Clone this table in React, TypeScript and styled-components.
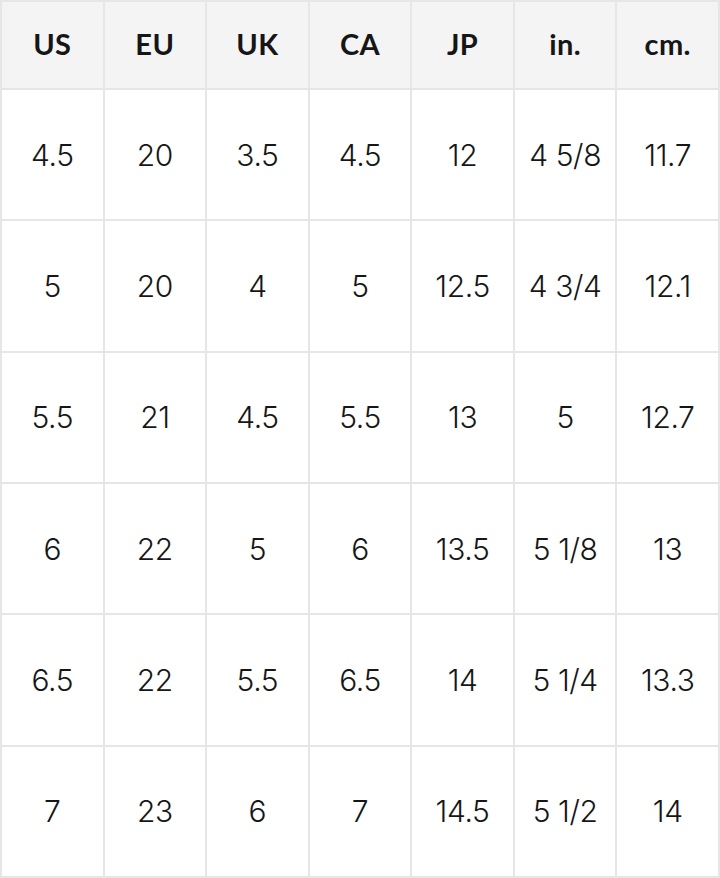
import styled, { createGlobalStyle } from "styled-components"

const GlobalStyle = createGlobalStyle`
    html, body {
        margin: 0;
        padding: 0;
        background: #ffffff;
    }
    body {
        font-family: Inter, "Noto Sans", "Liberation Sans", sans-serif;
        color: #161616;
    }
`

const headers = ["US", "EU", "UK", "CA", "JP", "in.", "cm."]

const rows = [
    ["4.5", "20", "3.5", "4.5", "12", "4 5/8", "11.7"],
    ["5", "20", "4", "5", "12.5", "4 3/4", "12.1"],
    ["5.5", "21", "4.5", "5.5", "13", "5", "12.7"],
    ["6", "22", "5", "6", "13.5", "5 1/8", "13"],
    ["6.5", "22", "5.5", "6.5", "14", "5 1/4", "13.3"],
    ["7", "23", "6", "7", "14.5", "5 1/2", "14"],
]

const Chart = styled.div`
    width: 720px;
    height: 878px;
    box-sizing: border-box;
    display: grid;
    grid-template-columns: repeat(7, 1fr);
    grid-template-rows: 86px repeat(6, 1fr);
    gap: 2px;
    padding: 2px;
    background-color: #e6e6e6;
`

const Cell = styled.div<{ $head?: boolean }>`
    display: flex;
    align-items: center;
    justify-content: center;
    background-color: ${({ $head }) => ($head ? "#f4f4f4" : "#ffffff")};
    font-family: ${({ $head }) => ($head ? "Lato, Inter, sans-serif" : "Inter, sans-serif")};
    font-size: ${({ $head }) => ($head ? "29px" : "30px")};
    font-weight: ${({ $head }) => ($head ? 700 : 300)};
    letter-spacing: ${({ $head }) => ($head ? "0.4px" : "-0.4px")};
    padding-bottom: ${({ $head }) => ($head ? "3px" : "0")};
`

export default function App() {
    return (
        <>
            <GlobalStyle />
            <Chart>
                {headers.map((h) => (
                    <Cell key={h} $head>{h}</Cell>
                ))}
                {rows.map((row, i) =>
                    row.map((value, j) => <Cell key={`${i}-${j}`}>{value}</Cell>)
                )}
            </Chart>
        </>
    )
}
